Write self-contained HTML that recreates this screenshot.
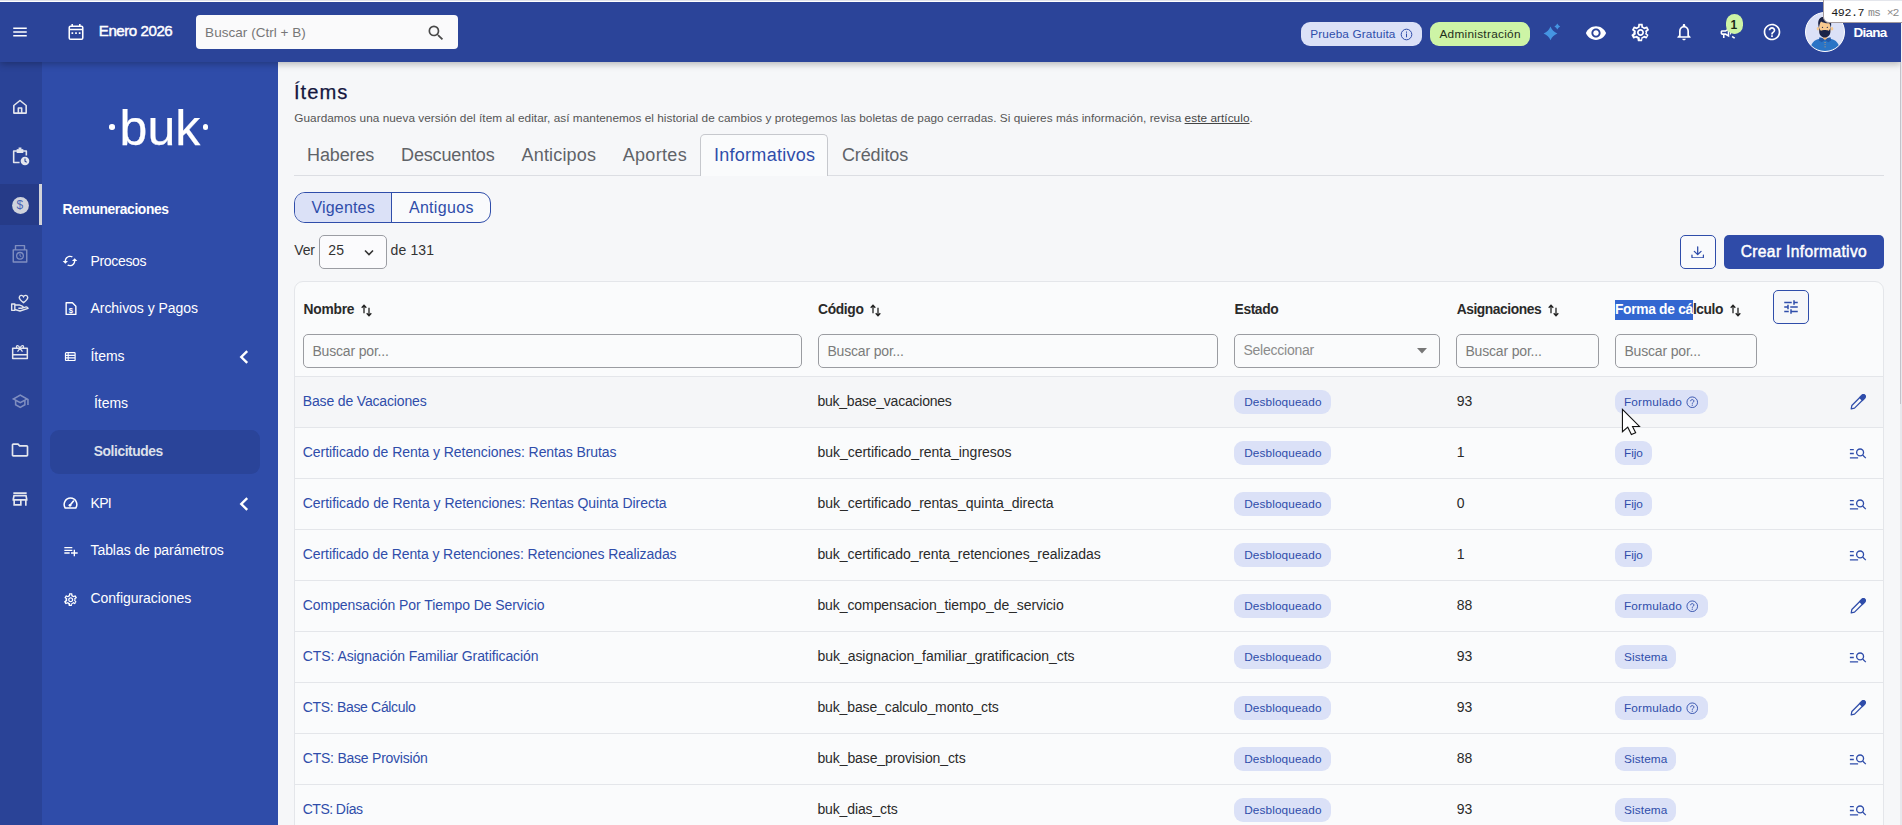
<!DOCTYPE html>
<html lang="es">
<head>
<meta charset="utf-8">
<title>Ítems</title>
<style>
*{box-sizing:border-box;margin:0;padding:0}
html,body{width:1902px;height:825px;overflow:hidden;background:#f6f7f9;font-family:"Liberation Sans",sans-serif;color:#333}
svg{display:block}
.abs{position:absolute}
.t{position:absolute;white-space:pre;line-height:1}
.w{fill:#fff}
.b{fill:#2f4daa}
</style>
</head>
<body>

<div class="abs" style="left:0px;top:62px;width:42px;height:763px;background:#2a4397"></div>
<div class="abs" style="left:42px;top:62px;width:236px;height:763px;background:#2f4ca9"></div>
<div class="abs" style="left:0px;top:2px;width:1901px;height:60px;background:#2b4499;box-shadow:0 2px 7px 0 rgba(0,0,0,.28)"></div>
<div class="abs" style="left:0px;top:0px;width:1902px;height:1px;background:#dfe2ea"></div>
<div class="abs" style="left:0px;top:1px;width:1902px;height:1px;background:#fff"></div>
<div class="abs" style="left:1900px;top:62px;width:2px;height:763px;background:#e7e8ec"></div>
<div class="abs" style="left:1900px;top:62px;width:1px;height:342px;background:#c3c2c9"></div>
<div class="abs" style="left:1901px;top:0px;width:1px;height:62px;background:#f3f4f6"></div>
<header>
<svg class="abs" style="left:11px;top:23px;" width="18" height="18" viewBox="0 0 24 24"><path class="w" d="M3 18h18v-2H3v2zm0-5h18v-2H3v2zm0-7v2h18V6H3z"/></svg>
<svg class="abs" style="left:67px;top:22px;" width="18" height="20" viewBox="0 0 18 20"><rect x="2.250" y="4.300" width="13.500" height="13" rx="1.300" fill="none" stroke="#fff" stroke-width="1.550"/><path fill="none" stroke="#fff" stroke-width="1.550" d="M2.300 7.400h13.400M5.200 1.900v2.600M12.800 1.900v2.600"/><path class="w" d="M4.500 10.200h1.700v1.700H4.500zM8.150 10.200h1.700v1.700H8.150zM11.800 10.200h1.700v1.700h-1.700z"/></svg>
<div class="t" style="left:98.8px;top:23.00px;font-size:15.1px;color:#fff;letter-spacing:-0.456px;-webkit-text-stroke:.45px #fff;">Enero 2026</div>
<div class="abs" style="left:196px;top:15px;width:262px;height:34px;background:#fafafb;border-radius:4px"></div>
<div class="t" style="left:205.1px;top:26.00px;font-size:13.5px;color:#777;letter-spacing:0.038px;">Buscar (Ctrl + B)</div>
<svg class="abs" style="left:425.5px;top:22.5px;" width="20" height="20" viewBox="0 0 24 24"><path fill="#4a4a4a" d="M15.500 14h-.79l-.28-.27A6.471 6.471 0 0 0 16 9.500 6.500 6.500 0 1 0 9.500 16c1.610 0 3.090-.59 4.230-1.570l.27.280v.79l5 4.990L20.490 19l-4.990-5zm-6 0C7.010 14 5 11.990 5 9.500S7.010 5 9.500 5 14 7.010 14 9.500 11.990 14 9.500 14z"/></svg>
<div class="abs" style="left:1301px;top:22px;width:121px;height:24px;background:#dbe1f7;border-radius:9px"></div>
<div class="t" style="left:1310.2px;top:29.00px;font-size:11.8px;color:#2f4daa;letter-spacing:0.135px;">Prueba Gratuita</div>
<svg class="abs" style="left:1399.5px;top:27.8px;" width="13" height="13" viewBox="0 0 13 13"><circle cx="6.500" cy="6.500" r="5.300" fill="none" stroke="#2f4daa" stroke-width="1"/><path d="M6 5.600h1v3.700H6zM6 3.500h1v1.200H6z" fill="#2f4daa"/></svg>
<div class="abs" style="left:1430px;top:22px;width:100px;height:24px;background:#cdf4a6;border-radius:9px"></div>
<div class="t" style="left:1439.4px;top:29.00px;font-size:11.8px;color:#1f2f1c;letter-spacing:0.288px;">Administración</div>
<svg class="abs" style="left:1540px;top:20px;" width="24" height="24" viewBox="0 0 24 24"><path fill="#4595e2" d="M10.5 6.5Q12.432 11.468 17.4 13.4Q12.432 15.332 10.5 20.3Q8.568 15.332 3.5999999999999996 13.4Q8.568 11.468 10.5 6.5z"/><path fill="#4595e2" d="M17.3 3.6Q18.17 5.63 20.2 6.5Q18.17 7.37 17.3 9.4Q16.43 7.37 14.4 6.5Q16.43 5.63 17.3 3.6z"/></svg>
<svg class="abs" style="left:1585px;top:21.6px;" width="22" height="22" viewBox="0 0 24 24"><path class="w" d="M12 4.500C7 4.500 2.730 7.610 1 12c1.730 4.390 6 7.500 11 7.500s9.270-3.110 11-7.500c-1.730-4.390-6-7.500-11-7.500zM12 17c-2.760 0-5-2.240-5-5s2.240-5 5-5 5 2.240 5 5-2.240 5-5 5zm0-8c-1.660 0-3 1.340-3 3s1.340 3 3 3 3-1.340 3-3-1.340-3-3-3z"/></svg>
<svg class="abs" style="left:1629.5px;top:21.5px;" width="21" height="21" viewBox="0 0 24 24"><path class="w" d="M19.430 12.980c.04-.32.070-.64.070-.98 0-.34-.03-.66-.07-.98l2.110-1.650c.19-.15.240-.42.120-.64l-2-3.460c-.09-.16-.26-.25-.44-.25-.06 0-.12.010-.17.030l-2.490 1c-.52-.4-1.080-.73-1.690-.98l-.38-2.650C14.460 2.180 14.250 2 14 2h-4c-.25 0-.46.180-.49.420l-.38 2.650c-.61.250-1.170.59-1.690.98l-2.490-1c-.06-.02-.12-.03-.18-.03-.17 0-.34.090-.43.250l-2 3.460c-.13.220-.07.490.12.640l2.110 1.650c-.4.320-.7.650-.7.980 0 .33.030.66.070.98l-2.110 1.650c-.19.150-.24.420-.12.640l2 3.460c.9.160.26.250.44.250.06 0 .12-.1.170-.03l2.490-1c.52.400 1.080.730 1.690.98l.38 2.650c.3.240.24.420.49.420h4c.25 0 .46-.18.490-.42l.38-2.650c.61-.25 1.170-.59 1.690-.98l2.490 1c.6.020.12.030.18.030.17 0 .34-.9.430-.25l2-3.460c.12-.22.070-.49-.12-.64l-2.110-1.650zm-1.980-1.710c.4.310.5.520.5.730 0 .21-.2.430-.5.730l-.14 1.130.89.700 1.080.84-.7 1.210-1.270-.51-1.040-.42-.9.680c-.43.320-.84.560-1.250.73l-1.060.43-.16 1.130-.2 1.350h-1.400l-.19-1.350-.16-1.130-1.060-.43c-.43-.18-.83-.41-1.230-.71l-.91-.7-1.060.43-1.270.51-.7-1.210 1.080-.84.890-.7-.14-1.130c-.03-.31-.05-.54-.05-.74s.02-.43.050-.73l.14-1.130-.89-.7-1.080-.84.700-1.210 1.270.51 1.040.42.900-.68c.43-.32.840-.56 1.250-.73l1.060-.43.160-1.130.2-1.350h1.390l.19 1.350.16 1.130 1.060.43c.43.180.83.410 1.230.71l.91.700 1.060-.43 1.270-.51.700 1.210-1.070.85-.89.700.14 1.130zM12 8c-2.210 0-4 1.790-4 4s1.790 4 4 4 4-1.790 4-4-1.790-4-4-4zm0 6c-1.100 0-2-.9-2-2s.9-2 2-2 2 .9 2 2-.9 2-2 2z"/></svg>
<svg class="abs" style="left:1674px;top:22px;" width="20" height="20" viewBox="0 0 24 24"><path class="w" d="M12 22c1.100 0 2-.9 2-2h-4c0 1.100.9 2 2 2zm6-6v-5c0-3.070-1.630-5.640-4.500-6.320V4c0-.83-.67-1.500-1.500-1.500s-1.500.67-1.500 1.500v.68C7.640 5.360 6 7.920 6 11v5l-2 2v1h16v-1l-2-2zm-2 1H8v-6c0-2.480 1.510-4.500 4-4.500s4 2.020 4 4.500v6z"/></svg>
<svg class="abs" style="left:1718.5px;top:23px;" width="19" height="19" viewBox="0 0 24 24"><path class="w" d="M18 11v2h4v-2h-4zm-2 6.610c.96.710 2.210 1.650 3.200 2.390.4-.53.8-1.070 1.200-1.600-.99-.74-2.240-1.680-3.200-2.400-.4.540-.8 1.080-1.200 1.610zM20.400 5.600c-.4-.53-.8-1.070-1.200-1.600-.99.740-2.240 1.680-3.200 2.400.4.530.8 1.070 1.200 1.600.96-.72 2.210-1.650 3.200-2.400zM4 9c-1.100 0-2 .9-2 2v2c0 1.100.9 2 2 2h1v4h2v-4h1l5 3V6L8 9H4zm5.030 1.710L11 9.530v4.940l-1.970-1.180-.48-.29H4v-2h4.550l.48-.29zM15.500 12c0-1.330-.58-2.530-1.500-3.350v6.690c.92-.81 1.500-2.010 1.500-3.340z"/></svg>
<div class="abs" style="left:1725.5px;top:14px;width:17px;height:20px;background:#cdf4a6;border-radius:8.500px"></div>
<div class="t" style="left:1730.5px;top:19.00px;font-size:12px;font-weight:700;color:#1a2a18;">1</div>
<svg class="abs" style="left:1762px;top:22px;" width="20" height="20" viewBox="0 0 24 24"><path class="w" d="M11 18h2v-2h-2v2zm1-16C6.480 2 2 6.480 2 12s4.480 10 10 10 10-4.480 10-10S17.520 2 12 2zm0 18c-4.410 0-8-3.590-8-8s3.590-8 8-8 8 3.590 8 8-3.590 8-8 8zm0-14c-2.210 0-4 1.790-4 4h2c0-1.100.9-2 2-2s2 .9 2 2c0 2-3 1.750-3 5h2c0-2.250 3-2.500 3-5 0-2.210-1.790-4-4-4z"/></svg>
<div class="abs" style="left:1805px;top:12px;width:40px;height:40px;border-radius:20px;background:#dbe1f7;border:1px solid #fff;overflow:hidden"><svg width="38" height="38" viewBox="0 0 38 38">
<path d="M4.300 38.500c0-7.500 3.400-12 9.700-12.700h10c6.300.7 9.700 5.200 9.700 12.700z" fill="#2a74c5"/>
<path d="M13.400 24.200l5.600 1.400 5.600-1.400.5 3.400-2.900 1.700-3.200-2.300-3.200 2.300-2.900-1.700z" fill="#2359a8"/>
<path d="M16.800 22h4.400v3.200L19 27l-2.200-1.800z" fill="#f0b97f"/>
<ellipse cx="12" cy="15.700" rx="1.300" ry="1.700" fill="#f7c98f"/><ellipse cx="26" cy="15.700" rx="1.300" ry="1.700" fill="#f7c98f"/>
<rect x="13.200" y="8" width="11.200" height="13" rx="3" fill="#f7c98f"/>
<path d="M13.200 14.200v4.300c0 3.600 2.400 6 5.600 6s5.600-2.400 5.600-6v-4.300c-.5 2.300-1.100 3.200-2.100 3.500-1.300-.8-5.700-.8-7 0-1-.3-1.600-1.200-2.100-3.500z" fill="#1b2447"/>
<path d="M12.900 15c-1-3.600-1-6.600.2-8.700 1.200-2.100 3.900-2.800 6.600-2.400 2.300.3 3.800 1.300 4.600 2.900 1.100 2 1.100 5 .5 8.200-.3-2.200-.8-3.800-1.600-4.800-2.700.2-6.300-.3-8.200-1.700-1 1.500-1.700 3.800-2.100 6.500z" fill="#1b2447"/>
<circle cx="16.500" cy="14.300" r=".65" fill="#1b2447"/><circle cx="21.300" cy="14.300" r=".65" fill="#1b2447"/>
<path d="M18.500 29.300h1.200v.7h-1.200zM18.500 31.400h1.200v.7h-1.200zM18.500 33.500h1.200v.7h-1.200z" fill="#d9a066"/>
</svg></div>
<div class="t" style="left:1853.5px;top:26.00px;font-size:13.5px;font-weight:700;color:#fff;letter-spacing:-0.753px;">Diana</div>
<div class="abs" style="left:1823px;top:-1px;width:80px;height:24px;background:#fff;border:1px solid #a39a9c;border-bottom-left-radius:6px"></div>
<div class="abs" style="left:1824px;top:0px;width:78px;height:1px;background:#e4e6ec"></div>
<div class="t" style="left:1831.3px;top:8.00px;font-size:11.7px;color:#1a1a1a;letter-spacing:-0.456px;font-family:'Liberation Mono',monospace;">492.7</div>
<div class="t" style="left:1868px;top:7.00px;font-size:11.5px;color:#8a8a8a;letter-spacing:-0.806px;font-family:'Liberation Mono',monospace;">ms</div>
<div class="t" style="left:1886.8px;top:7.00px;font-size:11.5px;color:#8a8a8a;letter-spacing:-1.256px;font-family:'Liberation Mono',monospace;">×2</div>
</header>
<nav>
<div class="abs" style="left:0px;top:184px;width:42px;height:41px;background:#263b88"></div>
<div class="abs" style="left:39px;top:184px;width:3px;height:41px;background:#d3d4d9"></div>
<svg class="abs" style="left:10.0px;top:97.0px;" width="20" height="20" viewBox="0 0 24 24"><path fill="none" stroke="#e4e6ed" stroke-width="1.900" stroke-linejoin="round" d="M4.600 10.200L12 4.200l7.400 6V19.300H4.600zM10 19.300V13.200h4v6.100"/></svg>
<svg class="abs" style="left:10.0px;top:146.0px;" width="20" height="20" viewBox="0 0 24 24"><path fill="none" stroke="#e4e6ed" stroke-width="1.900" stroke-linejoin="round" d="M11.500 19.700H4.400V5.900h15.200V11.500"/><path fill="#e4e6ed" d="M8 3.800h8V8.400H8z"/><path fill="#e4e6ed" d="M10.300 1.800h3.400v2.800h-3.400z"/><circle fill="#e4e6ed" cx="18" cy="18" r="5.200"/><path d="M18 15v3.200l2 1.300" fill="none" stroke="#2a4397" stroke-width="1.300"/></svg>
<svg class="abs" style="left:11.5px;top:196.5px;" width="17" height="17" viewBox="0 0 17 17"><circle cx="8.500" cy="8.500" r="8.400" fill="#d0d3dc"/></svg>
<div class="t" style="left:16.6px;top:199.00px;font-size:12px;color:#4b66b6;">$</div>
<svg class="abs" style="left:10.0px;top:244.0px;opacity:.4" width="20" height="20" viewBox="0 0 24 24"><path fill="none" stroke="#fff" stroke-width="1.700" stroke-linejoin="round" d="M3.900 7h16.200v14.600H3.900zM6.600 7V1.900h10.800V7"/><circle cx="12" cy="14.200" r="4" fill="none" stroke="#fff" stroke-width="1.500"/><path d="M12 11.800v2.500l1.700 1" fill="none" stroke="#fff" stroke-width="1.200"/></svg>
<svg class="abs" style="left:10.0px;top:293.0px;" width="20" height="20" viewBox="0 0 24 24"><path fill="none" stroke="#e4e6ed" stroke-width="1.700" stroke-linejoin="round" d="M2 13.200h3.800v7.600H2zM5.800 14.300h5.200l3.700 1.500c1.500.7 1 2.500-.5 2.500H10M5.800 19.800l6.200 1.800 9.700-3.100c-.5-1.800-2-2-3.500-1.500l-3.500 1"/><path fill="none" stroke="#e4e6ed" stroke-width="1.700" d="M16.200 11.500c-3.300-2.600-5.100-4.200-5.100-6.200 0-2.800 3.800-3.400 5.100-.9 1.300-2.500 5.100-1.900 5.100.9 0 2-1.800 3.600-5.100 6.200z"/></svg>
<svg class="abs" style="left:10.0px;top:342.0px;" width="20" height="20" viewBox="0 0 24 24"><path fill="none" stroke="#e4e6ed" stroke-width="1.800" stroke-linejoin="round" d="M3.200 7.500h17.600v12.200H3.200zM3.200 15.200h17.600"/><path fill="none" stroke="#e4e6ed" stroke-width="1.500" d="M12 7.500C10 2.500 6.300 4 8.300 7.500M12 7.500c2-5 5.700-3.500 3.700 0M12 7.500l-3 4M12 7.500l3 4"/></svg>
<svg class="abs" style="left:10.75px;top:391.75px;opacity:.4" width="18.5" height="18.5" viewBox="0 0 24 24"><path class="w" d="M12 3L1 9l4 2.180v6L12 21l7-3.820v-6l2-1.090V17h2V9L12 3zm6.820 6L12 12.720 5.180 9 12 5.280 18.820 9zM17 15.990l-5 2.730-5-2.730v-3.720L12 15l5-2.730v3.720z"/></svg>
<svg class="abs" style="left:10.0px;top:440.0px;" width="20" height="20" viewBox="0 0 24 24"><path fill="#e4e6ed" d="M9.170 6l2 2H20v10H4V6h5.170M10 4H4c-1.100 0-1.990.9-1.990 2L2 18c0 1.100.9 2 2 2h16c1.100 0 2-.9 2-2V8c0-1.100-.9-2-2-2h-8l-2-2z"/></svg>
<svg class="abs" style="left:10.0px;top:489.0px;" width="20" height="20" viewBox="0 0 24 24"><path fill="#e4e6ed" d="M18.360 9l.6 3H5.040l.6-3h12.720M20 4H4v2h16V4zm0 3H4l-1 5v2h1v6h10v-6h4v6h2v-6h1v-2l-1-5zM6 18v-4h6v4H6z"/></svg>
</nav>
<aside>
<div class="abs" style="left:109.3px;top:124.3px;width:5.6px;height:5.6px;background:#fff;border-radius:50%"></div>
<div class="abs" style="left:202.8px;top:124.3px;width:5.6px;height:5.6px;background:#fff;border-radius:50%"></div>
<div class="t" style="left:119.5px;top:103.00px;font-size:50px;color:#fff;letter-spacing:0.125px;-webkit-text-stroke:.25px #fff;">buk</div>
<div class="t" style="left:62.6px;top:203.00px;font-size:13.8px;font-weight:700;color:#fff;letter-spacing:-0.371px;">Remuneraciones</div>
<svg class="abs" style="left:62.3px;top:252.9px;" width="16" height="16" viewBox="0 0 24 24"><path class="w" d="M19 8l-4 4h3c0 3.310-2.690 6-6 6-1.010 0-1.970-.25-2.800-.7l-1.460 1.460C8.970 19.540 10.430 20 12 20c4.420 0 8-3.580 8-8h3l-4-4zM6 12c0-3.310 2.690-6 6-6 1.010 0 1.970.250 2.800.7l1.460-1.460C15.030 4.460 13.570 4 12 4c-4.420 0-8 3.580-8 8H1l4 4 4-4H6z"/></svg>
<div class="t" style="left:90.5px;top:254.00px;font-size:14px;color:#fff;letter-spacing:-0.332px;">Procesos</div>
<svg class="abs" style="left:63.6px;top:301.2px;" width="14" height="15.2" viewBox="0 0 15 16"><path fill="none" stroke="#fff" stroke-width="1.500" stroke-linejoin="round" d="M2.300 1.800h6.700l3.700 3.700v8.700H2.300z"/><text x="7.400" y="12.300" font-size="8.200" font-weight="700" text-anchor="middle" fill="#fff" font-family="Liberation Sans,sans-serif">$</text></svg>
<div class="t" style="left:90.5px;top:301.00px;font-size:14px;color:#fff;letter-spacing:-0.048px;">Archivos y Pagos</div>
<svg class="abs" style="left:63.7px;top:352.2px;" width="12.6" height="9.3" viewBox="0 0 13 11"><rect x=".8" y=".8" width="11.400" height="9.400" rx="1" fill="none" stroke="#fff" stroke-width="1.400"/><path stroke="#fff" stroke-width="1.300" d="M1 4h11M1 7h11M4 1v9"/></svg>
<div class="t" style="left:90.5px;top:349.00px;font-size:14px;color:#fff;letter-spacing:-0.047px;">Ítems</div>
<svg class="abs" style="left:238.5px;top:349.8px;" width="10" height="14" viewBox="0 0 10 14"><path fill="none" stroke="#fff" stroke-width="2.400" d="M8.200 1.200L2.300 7l5.900 5.800"/></svg>
<div class="t" style="left:94px;top:396.00px;font-size:14px;color:#fff;letter-spacing:-0.047px;">Ítems</div>
<div class="abs" style="left:50px;top:430px;width:210px;height:44px;background:#2a4499;border-radius:9px"></div>
<div class="t" style="left:93.8px;top:445.00px;font-size:13.8px;font-weight:700;color:#dde0ea;letter-spacing:-0.419px;">Solicitudes</div>
<svg class="abs" style="left:63px;top:497px;" width="15" height="12" viewBox="0 0 15 12"><path fill="none" stroke="#fff" stroke-width="1.500" stroke-linecap="round" d="M2.200 11C-.5 6.500 2.500 1 7.500 1s8 5.500 5.300 10z"/><path stroke="#fff" stroke-width="1.600" stroke-linecap="round" d="M7 8.300L10.500 4"/><circle class="w" cx="7" cy="8.300" r="1.400"/></svg>
<div class="t" style="left:90.5px;top:496.00px;font-size:14px;color:#fff;letter-spacing:-0.659px;">KPI</div>
<svg class="abs" style="left:238.5px;top:496.8px;" width="10" height="14" viewBox="0 0 10 14"><path fill="none" stroke="#fff" stroke-width="2.400" d="M8.200 1.200L2.300 7l5.900 5.800"/></svg>
<svg class="abs" style="left:62.5px;top:543px;" width="16" height="16" viewBox="0 0 24 24"><path class="w" d="M14 10H2v2h12v-2zm0-4H2v2h12V6zm4 8v-4h-2v4h-4v2h4v4h2v-4h4v-2h-4zM2 16h8v-2H2v2z"/></svg>
<div class="t" style="left:90.5px;top:543.00px;font-size:14px;color:#fff;letter-spacing:-0.067px;">Tablas de parámetros</div>
<svg class="abs" style="left:62.6px;top:591.5px;" width="15.4" height="15.4" viewBox="0 0 24 24"><path class="w" d="M19.430 12.980c.04-.32.070-.64.070-.98 0-.34-.03-.66-.07-.98l2.110-1.650c.19-.15.240-.42.120-.64l-2-3.460c-.09-.16-.26-.25-.44-.25-.06 0-.12.010-.17.030l-2.490 1c-.52-.4-1.080-.73-1.690-.98l-.38-2.650C14.460 2.180 14.250 2 14 2h-4c-.25 0-.46.180-.49.420l-.38 2.650c-.61.250-1.170.59-1.690.98l-2.490-1c-.06-.02-.12-.03-.18-.03-.17 0-.34.090-.43.250l-2 3.460c-.13.220-.07.490.12.640l2.110 1.650c-.4.320-.7.650-.7.980 0 .33.030.66.070.98l-2.110 1.650c-.19.150-.24.420-.12.640l2 3.460c.9.160.26.250.44.250.06 0 .12-.1.170-.03l2.490-1c.52.400 1.080.730 1.690.98l.38 2.650c.3.240.24.420.49.420h4c.25 0 .46-.18.490-.42l.38-2.650c.61-.25 1.170-.59 1.690-.98l2.490 1c.6.020.12.030.18.030.17 0 .34-.9.430-.25l2-3.460c.12-.22.070-.49-.12-.64l-2.110-1.650zm-1.980-1.710c.4.310.5.520.5.730 0 .21-.2.430-.5.730l-.14 1.130.89.700 1.080.84-.7 1.210-1.270-.51-1.040-.42-.9.680c-.43.320-.84.560-1.250.73l-1.060.43-.16 1.130-.2 1.350h-1.400l-.19-1.350-.16-1.130-1.060-.43c-.43-.18-.83-.41-1.230-.71l-.91-.7-1.060.43-1.270.51-.7-1.210 1.080-.84.890-.7-.14-1.130c-.03-.31-.05-.54-.05-.74s.02-.43.050-.73l.14-1.130-.89-.7-1.080-.84.700-1.210 1.270.51 1.040.42.900-.68c.43-.32.840-.56 1.250-.73l1.060-.43.160-1.130.2-1.350h1.390l.19 1.350.16 1.130 1.060.43c.43.180.83.410 1.230.71l.91.700 1.060-.43 1.270-.51.700 1.210-1.070.85-.89.700.14 1.130zM12 8c-2.210 0-4 1.790-4 4s1.790 4 4 4 4-1.790 4-4-1.790-4-4-4zm0 6c-1.100 0-2-.9-2-2s.9-2 2-2 2 .9 2 2-.9 2-2 2z"/></svg>
<div class="t" style="left:90.5px;top:591.00px;font-size:14px;color:#fff;letter-spacing:-0.038px;">Configuraciones</div>
</aside>
<main>
<div class="t" style="left:294px;top:82.00px;font-size:20.2px;color:#15173f;letter-spacing:0.988px;-webkit-text-stroke:.25px #15173f;">Ítems</div>
<div class="t" style="left:294.3px;top:113.00px;font-size:11.8px;color:#555;letter-spacing:0.035px;">Guardamos una nueva versión del ítem al editar, así mantenemos el historial de cambios y protegemos las boletas de pago cerradas. Si quieres más información, revisa </div>
<div class="t" style="left:1184.6px;top:113.00px;font-size:11.8px;color:#444;letter-spacing:0.049px;text-decoration:underline;">este artículo</div>
<div class="t" style="left:1249.6px;top:113.00px;font-size:11.8px;color:#555;">.</div>
<div class="abs" style="left:294px;top:175px;width:1590px;height:1px;background:#dcdee3"></div>
<div class="abs" style="left:700px;top:134px;width:128px;height:42px;background:#fafbfc;border:1px solid #c6c8cd;border-bottom:none;border-radius:5px 5px 0 0"></div>
<div class="t" style="left:307px;top:146.00px;font-size:18px;color:#606368;letter-spacing:-0.121px;">Haberes</div>
<div class="t" style="left:401.1px;top:146.00px;font-size:18px;color:#606368;letter-spacing:-0.166px;">Descuentos</div>
<div class="t" style="left:521.5px;top:146.00px;font-size:18px;color:#606368;letter-spacing:0.184px;">Anticipos</div>
<div class="t" style="left:622.7px;top:146.00px;font-size:18px;color:#606368;letter-spacing:0.322px;">Aportes</div>
<div class="t" style="left:714px;top:146.00px;font-size:18px;color:#2f4daa;letter-spacing:0.271px;">Informativos</div>
<div class="t" style="left:841.9px;top:146.00px;font-size:18px;color:#606368;letter-spacing:-0.091px;">Créditos</div>
<div class="abs" style="left:294px;top:192px;width:197px;height:31px;border:1px solid #2f4daa;border-radius:11px;overflow:hidden;background:#f9fafc"><div class="abs" style="left:0;top:0;width:97px;height:29px;background:#dbe1f7;border-right:1px solid #2f4daa"></div></div>
<div class="t" style="left:311.4px;top:200.00px;font-size:16px;color:#2f4daa;letter-spacing:0.189px;">Vigentes</div>
<div class="t" style="left:408.9px;top:200.00px;font-size:16px;color:#2f4daa;letter-spacing:0.317px;">Antiguos</div>
<div class="t" style="left:294.3px;top:243.00px;font-size:14px;letter-spacing:-0.205px;">Ver</div>
<div class="abs" style="left:319px;top:235px;width:68px;height:34px;background:#fbfbfd;border:1px solid #9b9da3;border-radius:5px"></div>
<div class="t" style="left:328.2px;top:243.00px;font-size:14px;letter-spacing:0.261px;">25</div>
<svg class="abs" style="left:364px;top:248.5px;" width="10" height="8" viewBox="0 0 10 8"><path fill="none" stroke="#333" stroke-width="1.600" d="M1 1.500l4 4 4-4"/></svg>
<div class="t" style="left:390.6px;top:243.00px;font-size:14px;letter-spacing:0.129px;">de 131</div>
<div class="abs" style="left:1680px;top:235px;width:36px;height:34px;background:#f9fafc;border:1px solid #2f4daa;border-radius:5px"></div>
<svg class="abs" style="left:1690.8px;top:245.5px;" width="13.4" height="12.5" viewBox="0 0 14 13"><path fill="none" stroke="#2f4daa" stroke-width="1.350" stroke-linecap="round" stroke-linejoin="round" d="M7 .8v8M3.500 5.600L7 9l3.500-3.400M1 9.500v2c0 .5.300.8.800.8h10.400c.5 0 .8-.3.800-.8v-2"/></svg>
<div class="abs" style="left:1724px;top:235px;width:160px;height:34px;background:#2f4ba8;border-radius:5px"></div>
<div class="t" style="left:1740.7px;top:244.00px;font-size:15.6px;color:#fff;letter-spacing:0.349px;-webkit-text-stroke:.45px #fff;">Crear Informativo</div>
<div class="abs" style="left:294px;top:281px;width:1590px;height:560px;background:#fafbfc;border:1px solid #e4e6ea;border-radius:9px"></div>
<div class="abs" style="left:295px;top:377px;width:1588px;height:50px;background:#f5f6f8"></div>
<div class="t" style="left:303.5px;top:303.00px;font-size:13.8px;font-weight:700;color:#2a2a2a;letter-spacing:-0.223px;">Nombre</div>
<svg class="abs" style="left:361.3px;top:303.5px;" width="11" height="13" viewBox="0 0 11 13"><path fill="none" stroke="#222" stroke-width="1.300" d="M3 9.300V1.300M.7 3.800L3 1.300l2.300 2.500M8 3.700v8M5.700 9.200L8 11.700l2.300-2.500"/></svg>
<div class="t" style="left:818px;top:303.00px;font-size:13.8px;font-weight:700;color:#2a2a2a;letter-spacing:-0.336px;">Código</div>
<svg class="abs" style="left:869.8px;top:303.5px;" width="11" height="13" viewBox="0 0 11 13"><path fill="none" stroke="#222" stroke-width="1.300" d="M3 9.300V1.300M.7 3.800L3 1.300l2.300 2.500M8 3.700v8M5.700 9.200L8 11.700l2.300-2.500"/></svg>
<div class="t" style="left:1234.6px;top:303.00px;font-size:13.8px;font-weight:700;color:#2a2a2a;letter-spacing:-0.400px;">Estado</div>
<div class="t" style="left:1456.7px;top:303.00px;font-size:13.8px;font-weight:700;color:#2a2a2a;letter-spacing:-0.435px;">Asignaciones</div>
<svg class="abs" style="left:1548.3px;top:303.5px;" width="11" height="13" viewBox="0 0 11 13"><path fill="none" stroke="#222" stroke-width="1.300" d="M3 9.300V1.300M.7 3.800L3 1.300l2.300 2.500M8 3.700v8M5.700 9.200L8 11.700l2.300-2.500"/></svg>
<div class="abs" style="left:1615px;top:300px;width:78px;height:20px;background:#3367d1"></div>
<div class="t" style="left:1614.9px;top:303.00px;font-size:13.8px;font-weight:700;color:#fff;letter-spacing:-0.298px;">Forma de cá</div>
<div class="t" style="left:1692.9px;top:303.00px;font-size:13.8px;font-weight:700;color:#2a2a2a;letter-spacing:-0.401px;">lculo</div>
<svg class="abs" style="left:1729.9px;top:303.5px;" width="11" height="13" viewBox="0 0 11 13"><path fill="none" stroke="#222" stroke-width="1.300" d="M3 9.300V1.300M.7 3.800L3 1.300l2.300 2.500M8 3.700v8M5.700 9.200L8 11.700l2.300-2.500"/></svg>
<div class="abs" style="left:1773px;top:290px;width:36px;height:34px;background:#f6f7f9;border:1px solid #2f4daa;border-radius:5px"></div>
<svg class="abs" style="left:1782px;top:298px;" width="18" height="18" viewBox="0 0 24 24"><path fill="#2f4daa" d="M3 17v2h6v-2H3zM3 5v2h10V5H3zm10 16v-2h8v-2h-8v-2h-2v6h2zM7 9v2H3v2h4v2h2V9H7zm14 4v-2H11v2h10zm-6-4h2V7h4V5h-4V3h-2v6z"/></svg>
<div class="abs" style="left:303px;top:334px;width:499px;height:34px;background:#fafbfc;border:1px solid #9a9ca1;border-radius:5px"></div>
<div class="t" style="left:312.4px;top:344.00px;font-size:14px;color:#7b7b7b;letter-spacing:-0.169px;">Buscar por...</div>
<div class="abs" style="left:818px;top:334px;width:400px;height:34px;background:#fafbfc;border:1px solid #9a9ca1;border-radius:5px"></div>
<div class="t" style="left:827.4px;top:344.00px;font-size:14px;color:#7b7b7b;letter-spacing:-0.169px;">Buscar por...</div>
<div class="abs" style="left:1234px;top:334px;width:206px;height:34px;background:#fafbfc;border:1px solid #9a9ca1;border-radius:5px"></div>
<div class="t" style="left:1243.4px;top:343.00px;font-size:14px;color:#8b8b8b;letter-spacing:-0.232px;">Seleccionar</div>
<svg class="abs" style="left:1417px;top:348px;" width="10" height="6" viewBox="0 0 10 6"><path fill="#777" d="M0 0h10L5 5.500z"/></svg>
<div class="abs" style="left:1456px;top:334px;width:143px;height:34px;background:#fafbfc;border:1px solid #9a9ca1;border-radius:5px"></div>
<div class="t" style="left:1465.4px;top:344.00px;font-size:14px;color:#7b7b7b;letter-spacing:-0.169px;">Buscar por...</div>
<div class="abs" style="left:1615px;top:334px;width:142px;height:34px;background:#fafbfc;border:1px solid #9a9ca1;border-radius:5px"></div>
<div class="t" style="left:1624.4px;top:344.00px;font-size:14px;color:#7b7b7b;letter-spacing:-0.169px;">Buscar por...</div>
<div class="abs" style="left:295px;top:376px;width:1588px;height:1px;background:#e4e6ea"></div>
<div class="t" style="left:302.8px;top:394.00px;font-size:14px;color:#2f4daa;letter-spacing:-0.162px;">Base de Vacaciones</div>
<div class="t" style="left:817.4px;top:394.00px;font-size:14px;color:#2a2a2a;letter-spacing:-0.229px;">buk_base_vacaciones</div>
<div class="abs" style="left:1234px;top:390px;width:97px;height:24px;background:#dbe1f7;border-radius:9px"></div>
<div class="t" style="left:1244.2px;top:397.00px;font-size:11.8px;color:#2f4daa;letter-spacing:0.109px;">Desbloqueado</div>
<div class="t" style="left:1456.7px;top:394.00px;font-size:14px;color:#2a2a2a;letter-spacing:0.111px;">93</div>
<div class="abs" style="left:1615px;top:390px;width:93px;height:24px;background:#dbe1f7;border-radius:9px"></div>
<div class="t" style="left:1624px;top:397.00px;font-size:11.8px;color:#2f4daa;letter-spacing:0.168px;">Formulado</div>
<svg class="abs" style="left:1686px;top:395.8px;" width="12.5" height="12.5" viewBox="0 0 12.500 12.500"><circle cx="6.250" cy="6.250" r="5.300" fill="none" stroke="#2f4daa" stroke-width=".9"/><path fill="none" stroke="#2f4daa" stroke-width=".95" d="M4.600 5.200c0-2.100 3.300-2.100 3.300-.1 0 1.200-1.650 1.300-1.650 2.600"/><circle cx="6.250" cy="9.200" r=".6" fill="#2f4daa"/></svg>
<svg class="abs" style="left:1848px;top:392px;" width="20" height="20" viewBox="0 0 20 20"><g transform="translate(10 10) rotate(-45)"><path d="M-9.600 0L-6.800 -1.900H7.600a1.900 1.900 0 0 1 0 3.800H-6.800z" fill="none" stroke="#2f4daa" stroke-width="1.250" stroke-linejoin="round"/><path d="M4.300 -1.900H7.600a1.900 1.900 0 0 1 0 3.800H4.300z" fill="#2f4daa" stroke="#2f4daa" stroke-width="1.250"/></g></svg>
<div class="abs" style="left:295px;top:427px;width:1588px;height:1px;background:#e4e6ea"></div>
<div class="t" style="left:302.8px;top:445.00px;font-size:14px;color:#2f4daa;letter-spacing:-0.062px;">Certificado de Renta y Retenciones: Rentas Brutas</div>
<div class="t" style="left:817.4px;top:445.00px;font-size:14px;color:#2a2a2a;letter-spacing:-0.013px;">buk_certificado_renta_ingresos</div>
<div class="abs" style="left:1234px;top:441px;width:97px;height:24px;background:#dbe1f7;border-radius:9px"></div>
<div class="t" style="left:1244.2px;top:448.00px;font-size:11.8px;color:#2f4daa;letter-spacing:0.109px;">Desbloqueado</div>
<div class="t" style="left:1456.7px;top:445.00px;font-size:14px;color:#2a2a2a;letter-spacing:-0.297px;">1</div>
<div class="abs" style="left:1615px;top:441px;width:37px;height:24px;background:#dbe1f7;border-radius:9px"></div>
<div class="t" style="left:1624px;top:448.00px;font-size:11.8px;color:#2f4daa;letter-spacing:-0.079px;">Fijo</div>
<svg class="abs" style="left:1848px;top:447px;" width="20" height="13" viewBox="0 0 20 13"><path fill="none" stroke="#2f4daa" stroke-width="1.300" d="M1.900 2.600H5.800M1.900 6.500H5.800M1.900 10.800H10.100M14.600 8L17.800 11.100"/><circle cx="12.100" cy="5.400" r="3.450" fill="none" stroke="#2f4daa" stroke-width="1.350"/></svg>
<div class="abs" style="left:295px;top:478px;width:1588px;height:1px;background:#e4e6ea"></div>
<div class="t" style="left:302.8px;top:496.00px;font-size:14px;color:#2f4daa;letter-spacing:-0.036px;">Certificado de Renta y Retenciones: Rentas Quinta Directa</div>
<div class="t" style="left:817.4px;top:496.00px;font-size:14px;color:#2a2a2a;letter-spacing:-0.011px;">buk_certificado_rentas_quinta_directa</div>
<div class="abs" style="left:1234px;top:492px;width:97px;height:24px;background:#dbe1f7;border-radius:9px"></div>
<div class="t" style="left:1244.2px;top:499.00px;font-size:11.8px;color:#2f4daa;letter-spacing:0.109px;">Desbloqueado</div>
<div class="t" style="left:1456.7px;top:496.00px;font-size:14px;color:#2a2a2a;letter-spacing:-0.297px;">0</div>
<div class="abs" style="left:1615px;top:492px;width:37px;height:24px;background:#dbe1f7;border-radius:9px"></div>
<div class="t" style="left:1624px;top:499.00px;font-size:11.8px;color:#2f4daa;letter-spacing:-0.079px;">Fijo</div>
<svg class="abs" style="left:1848px;top:498px;" width="20" height="13" viewBox="0 0 20 13"><path fill="none" stroke="#2f4daa" stroke-width="1.300" d="M1.900 2.600H5.800M1.900 6.500H5.800M1.900 10.800H10.100M14.600 8L17.800 11.100"/><circle cx="12.100" cy="5.400" r="3.450" fill="none" stroke="#2f4daa" stroke-width="1.350"/></svg>
<div class="abs" style="left:295px;top:529px;width:1588px;height:1px;background:#e4e6ea"></div>
<div class="t" style="left:302.8px;top:547.00px;font-size:14px;color:#2f4daa;letter-spacing:-0.091px;">Certificado de Renta y Retenciones: Retenciones Realizadas</div>
<div class="t" style="left:817.4px;top:547.00px;font-size:14px;color:#2a2a2a;letter-spacing:-0.055px;">buk_certificado_renta_retenciones_realizadas</div>
<div class="abs" style="left:1234px;top:543px;width:97px;height:24px;background:#dbe1f7;border-radius:9px"></div>
<div class="t" style="left:1244.2px;top:550.00px;font-size:11.8px;color:#2f4daa;letter-spacing:0.109px;">Desbloqueado</div>
<div class="t" style="left:1456.7px;top:547.00px;font-size:14px;color:#2a2a2a;letter-spacing:-0.297px;">1</div>
<div class="abs" style="left:1615px;top:543px;width:37px;height:24px;background:#dbe1f7;border-radius:9px"></div>
<div class="t" style="left:1624px;top:550.00px;font-size:11.8px;color:#2f4daa;letter-spacing:-0.079px;">Fijo</div>
<svg class="abs" style="left:1848px;top:549px;" width="20" height="13" viewBox="0 0 20 13"><path fill="none" stroke="#2f4daa" stroke-width="1.300" d="M1.900 2.600H5.800M1.900 6.500H5.800M1.900 10.800H10.100M14.600 8L17.800 11.100"/><circle cx="12.100" cy="5.400" r="3.450" fill="none" stroke="#2f4daa" stroke-width="1.350"/></svg>
<div class="abs" style="left:295px;top:580px;width:1588px;height:1px;background:#e4e6ea"></div>
<div class="t" style="left:302.8px;top:598.00px;font-size:14px;color:#2f4daa;letter-spacing:-0.076px;">Compensación Por Tiempo De Servicio</div>
<div class="t" style="left:817.4px;top:598.00px;font-size:14px;color:#2a2a2a;letter-spacing:-0.081px;">buk_compensacion_tiempo_de_servicio</div>
<div class="abs" style="left:1234px;top:594px;width:97px;height:24px;background:#dbe1f7;border-radius:9px"></div>
<div class="t" style="left:1244.2px;top:601.00px;font-size:11.8px;color:#2f4daa;letter-spacing:0.109px;">Desbloqueado</div>
<div class="t" style="left:1456.7px;top:598.00px;font-size:14px;color:#2a2a2a;letter-spacing:0.111px;">88</div>
<div class="abs" style="left:1615px;top:594px;width:93px;height:24px;background:#dbe1f7;border-radius:9px"></div>
<div class="t" style="left:1624px;top:601.00px;font-size:11.8px;color:#2f4daa;letter-spacing:0.168px;">Formulado</div>
<svg class="abs" style="left:1686px;top:599.8px;" width="12.5" height="12.5" viewBox="0 0 12.500 12.500"><circle cx="6.250" cy="6.250" r="5.300" fill="none" stroke="#2f4daa" stroke-width=".9"/><path fill="none" stroke="#2f4daa" stroke-width=".95" d="M4.600 5.200c0-2.100 3.300-2.100 3.300-.1 0 1.200-1.650 1.300-1.650 2.600"/><circle cx="6.250" cy="9.200" r=".6" fill="#2f4daa"/></svg>
<svg class="abs" style="left:1848px;top:596px;" width="20" height="20" viewBox="0 0 20 20"><g transform="translate(10 10) rotate(-45)"><path d="M-9.600 0L-6.800 -1.900H7.600a1.900 1.900 0 0 1 0 3.800H-6.800z" fill="none" stroke="#2f4daa" stroke-width="1.250" stroke-linejoin="round"/><path d="M4.300 -1.900H7.600a1.900 1.900 0 0 1 0 3.800H4.300z" fill="#2f4daa" stroke="#2f4daa" stroke-width="1.250"/></g></svg>
<div class="abs" style="left:295px;top:631px;width:1588px;height:1px;background:#e4e6ea"></div>
<div class="t" style="left:302.8px;top:649.00px;font-size:14px;color:#2f4daa;letter-spacing:-0.084px;">CTS: Asignación Familiar Gratificación</div>
<div class="t" style="left:817.4px;top:649.00px;font-size:14px;color:#2a2a2a;letter-spacing:-0.029px;">buk_asignacion_familiar_gratificacion_cts</div>
<div class="abs" style="left:1234px;top:645px;width:97px;height:24px;background:#dbe1f7;border-radius:9px"></div>
<div class="t" style="left:1244.2px;top:652.00px;font-size:11.8px;color:#2f4daa;letter-spacing:0.109px;">Desbloqueado</div>
<div class="t" style="left:1456.7px;top:649.00px;font-size:14px;color:#2a2a2a;letter-spacing:0.111px;">93</div>
<div class="abs" style="left:1615px;top:645px;width:61px;height:24px;background:#dbe1f7;border-radius:9px"></div>
<div class="t" style="left:1624px;top:652.00px;font-size:11.8px;color:#2f4daa;letter-spacing:0.125px;">Sistema</div>
<svg class="abs" style="left:1848px;top:651px;" width="20" height="13" viewBox="0 0 20 13"><path fill="none" stroke="#2f4daa" stroke-width="1.300" d="M1.900 2.600H5.800M1.900 6.500H5.800M1.900 10.800H10.100M14.600 8L17.800 11.100"/><circle cx="12.100" cy="5.400" r="3.450" fill="none" stroke="#2f4daa" stroke-width="1.350"/></svg>
<div class="abs" style="left:295px;top:682px;width:1588px;height:1px;background:#e4e6ea"></div>
<div class="t" style="left:302.8px;top:700.00px;font-size:14px;color:#2f4daa;letter-spacing:-0.328px;">CTS: Base Cálculo</div>
<div class="t" style="left:817.4px;top:700.00px;font-size:14px;color:#2a2a2a;letter-spacing:-0.126px;">buk_base_calculo_monto_cts</div>
<div class="abs" style="left:1234px;top:696px;width:97px;height:24px;background:#dbe1f7;border-radius:9px"></div>
<div class="t" style="left:1244.2px;top:703.00px;font-size:11.8px;color:#2f4daa;letter-spacing:0.109px;">Desbloqueado</div>
<div class="t" style="left:1456.7px;top:700.00px;font-size:14px;color:#2a2a2a;letter-spacing:0.111px;">93</div>
<div class="abs" style="left:1615px;top:696px;width:93px;height:24px;background:#dbe1f7;border-radius:9px"></div>
<div class="t" style="left:1624px;top:703.00px;font-size:11.8px;color:#2f4daa;letter-spacing:0.168px;">Formulado</div>
<svg class="abs" style="left:1686px;top:701.8px;" width="12.5" height="12.5" viewBox="0 0 12.500 12.500"><circle cx="6.250" cy="6.250" r="5.300" fill="none" stroke="#2f4daa" stroke-width=".9"/><path fill="none" stroke="#2f4daa" stroke-width=".95" d="M4.600 5.200c0-2.100 3.300-2.100 3.300-.1 0 1.200-1.650 1.300-1.650 2.600"/><circle cx="6.250" cy="9.200" r=".6" fill="#2f4daa"/></svg>
<svg class="abs" style="left:1848px;top:698px;" width="20" height="20" viewBox="0 0 20 20"><g transform="translate(10 10) rotate(-45)"><path d="M-9.600 0L-6.800 -1.900H7.600a1.900 1.900 0 0 1 0 3.800H-6.800z" fill="none" stroke="#2f4daa" stroke-width="1.250" stroke-linejoin="round"/><path d="M4.300 -1.900H7.600a1.900 1.900 0 0 1 0 3.800H4.300z" fill="#2f4daa" stroke="#2f4daa" stroke-width="1.250"/></g></svg>
<div class="abs" style="left:295px;top:733px;width:1588px;height:1px;background:#e4e6ea"></div>
<div class="t" style="left:302.8px;top:751.00px;font-size:14px;color:#2f4daa;letter-spacing:-0.235px;">CTS: Base Provisión</div>
<div class="t" style="left:817.4px;top:751.00px;font-size:14px;color:#2a2a2a;letter-spacing:-0.092px;">buk_base_provision_cts</div>
<div class="abs" style="left:1234px;top:747px;width:97px;height:24px;background:#dbe1f7;border-radius:9px"></div>
<div class="t" style="left:1244.2px;top:754.00px;font-size:11.8px;color:#2f4daa;letter-spacing:0.109px;">Desbloqueado</div>
<div class="t" style="left:1456.7px;top:751.00px;font-size:14px;color:#2a2a2a;letter-spacing:0.111px;">88</div>
<div class="abs" style="left:1615px;top:747px;width:61px;height:24px;background:#dbe1f7;border-radius:9px"></div>
<div class="t" style="left:1624px;top:754.00px;font-size:11.8px;color:#2f4daa;letter-spacing:0.125px;">Sistema</div>
<svg class="abs" style="left:1848px;top:753px;" width="20" height="13" viewBox="0 0 20 13"><path fill="none" stroke="#2f4daa" stroke-width="1.300" d="M1.900 2.600H5.800M1.900 6.500H5.800M1.900 10.800H10.100M14.600 8L17.800 11.100"/><circle cx="12.100" cy="5.400" r="3.450" fill="none" stroke="#2f4daa" stroke-width="1.350"/></svg>
<div class="abs" style="left:295px;top:784px;width:1588px;height:1px;background:#e4e6ea"></div>
<div class="t" style="left:302.8px;top:802.00px;font-size:14px;color:#2f4daa;letter-spacing:-0.542px;">CTS: Días</div>
<div class="t" style="left:817.4px;top:802.00px;font-size:14px;color:#2a2a2a;letter-spacing:-0.127px;">buk_dias_cts</div>
<div class="abs" style="left:1234px;top:798px;width:97px;height:24px;background:#dbe1f7;border-radius:9px"></div>
<div class="t" style="left:1244.2px;top:805.00px;font-size:11.8px;color:#2f4daa;letter-spacing:0.109px;">Desbloqueado</div>
<div class="t" style="left:1456.7px;top:802.00px;font-size:14px;color:#2a2a2a;letter-spacing:0.111px;">93</div>
<div class="abs" style="left:1615px;top:798px;width:61px;height:24px;background:#dbe1f7;border-radius:9px"></div>
<div class="t" style="left:1624px;top:805.00px;font-size:11.8px;color:#2f4daa;letter-spacing:0.125px;">Sistema</div>
<svg class="abs" style="left:1848px;top:804px;" width="20" height="13" viewBox="0 0 20 13"><path fill="none" stroke="#2f4daa" stroke-width="1.300" d="M1.900 2.600H5.800M1.900 6.500H5.800M1.900 10.800H10.100M14.600 8L17.800 11.100"/><circle cx="12.100" cy="5.400" r="3.450" fill="none" stroke="#2f4daa" stroke-width="1.350"/></svg>
</main>
<svg class="abs" style="left:1620.7px;top:407.8px;" width="20" height="28.6" viewBox="0 0 21 30"><path fill="#fff" stroke="#111" stroke-width="1.150" stroke-linejoin="miter" d="M1.500 1.500V24.900l5.600-4.800 3.800 7.700 4.500-1.900-3.300-6.500h7.300z"/></svg>
</body>
</html>
